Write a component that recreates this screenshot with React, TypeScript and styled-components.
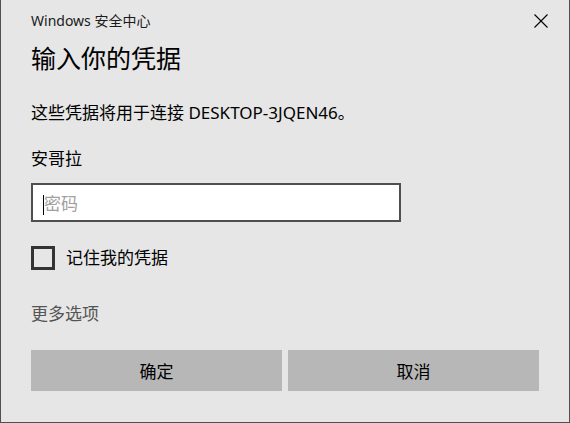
import React from 'react';
import styled, { createGlobalStyle } from 'styled-components';

const GlobalStyle = createGlobalStyle`
  html, body {
    margin: 0;
    padding: 0;
    background: #e6e6e6;
  }
  * {
    box-sizing: border-box;
  }
`

const fontStack = `"Segoe UI", "Noto Sans", "Noto Sans CJK SC", sans-serif`;

const Dialog = styled.section`
  width: 570px;
  height: 423px;
  background-color: #e6e6e6;
  border: 1px solid #505050;
  border-top: none;
  font-family: ${fontStack};
  color: #000;
  display: flex;
  flex-direction: column;
`

const TitleBar = styled.header`
  height: 41px;
  display: flex;
  align-items: center;
  justify-content: space-between;
  padding: 0 5px 0 30px;
`

const Caption = styled.div`
  font-size: 14px;
  line-height: 20px;
  color: #1a1a1a;
`

const CloseButton = styled.button`
  width: 46px;
  height: 41px;
  border: none;
  background: transparent;
  padding: 0;
  display: flex;
  align-items: center;
  justify-content: center;
  cursor: pointer;
`

const Body = styled.div`
  padding: 0 30px;
  display: flex;
  flex-direction: column;
`

const Heading = styled.h1`
  margin: 0;
  font-size: 25px;
  font-weight: 400;
  line-height: 34px;
`

const Text = styled.p<{ $top: number; $muted?: boolean }>`
  margin: ${(p) => p.$top}px 0 0;
  font-size: 17px;
  line-height: 24px;
  color: ${(p) => (p.$muted ? '#555' : '#000')};
`

const PasswordBox = styled.div`
  position: relative;
  margin-top: 12px;
  width: 370px;
  height: 39px;
  background: #fff;
  border: 2px solid #4f4f4f;
  display: flex;
  align-items: center;
  padding-left: 10px;
`

const Caret = styled.span`
  position: absolute;
  left: 10px;
  top: 10px;
  width: 1px;
  height: 20px;
  background: #000;
`

const Placeholder = styled.span`
  font-size: 17px;
  color: #a0a0a0;
  margin-left: 1px;
`

const CheckRow = styled.label`
  margin-top: 24px;
  display: flex;
  align-items: center;
  gap: 11px;
  font-size: 17px;
  line-height: 24px;
`

const CheckBox = styled.span`
  width: 24px;
  height: 24px;
  border: 3px solid #333;
  background: #e6e6e6;
`

const ButtonRow = styled.div`
  margin-top: 24px;
  display: grid;
  grid-template-columns: 1fr 1fr;
  gap: 6px;
`

const Button = styled.button`
  height: 41px;
  border: none;
  background: #b7b7b7;
  font-family: ${fontStack};
  font-size: 17px;
  color: #000;
  padding: 0;
`

export default function App() {
  return (
    <>
      <GlobalStyle />
      <Dialog>
        <TitleBar>
          <Caption>Windows 安全中心</Caption>
          <CloseButton aria-label="关闭">
            <svg width="14" height="14" viewBox="0 0 14 14">
              <path d="M0.5 0.5 L13.5 13.5 M13.5 0.5 L0.5 13.5" stroke="#000" strokeWidth="1.1" fill="none" />
            </svg>
          </CloseButton>
        </TitleBar>
        <Body>
          <Heading>输入你的凭据</Heading>
          <Text $top={26}>这些凭据将用于连接 DESKTOP-3JQEN46。</Text>
          <Text $top={22}>安哥拉</Text>
          <PasswordBox>
            <Caret />
            <Placeholder>密码</Placeholder>
          </PasswordBox>
          <CheckRow>
            <CheckBox />
            记住我的凭据
          </CheckRow>
          <Text $top={32} $muted>更多选项</Text>
          <ButtonRow>
            <Button>确定</Button>
            <Button>取消</Button>
          </ButtonRow>
        </Body>
      </Dialog>
    </>
  );
}
